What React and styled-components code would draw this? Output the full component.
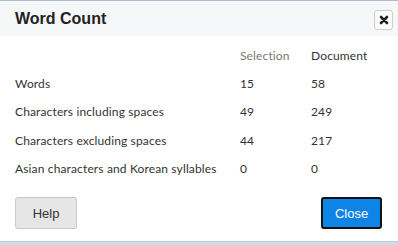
import React from "react";
import styled, { createGlobalStyle } from "styled-components";

const Global = createGlobalStyle`
  html, body { margin: 0; padding: 0; background: #c9dff0; }
  body { width: 398px; height: 245px; overflow: hidden; }
`;

const Dialog = styled.div`
  width: 398px;
  height: 242px;
  box-sizing: border-box;
  background: #fff;
  border-top: 1px solid #aebccc;
  border-bottom: 1px solid #c4c4c4;
  display: flex;
  flex-direction: column;
`;

const Header = styled.div`
  height: 35px;
  background: #f6f7f9;
  display: flex;
  align-items: center;
  justify-content: space-between;
  padding: 0 5px 0 15px;
`;

const Title = styled.h1`
  margin: 0;
  font: bold 16px "Liberation Sans", Arial, sans-serif;
  color: #222;
`;

const XButton = styled.button`
  width: 19px;
  height: 20px;
  padding: 0;
  border: 1px solid #cfcfcf;
  border-radius: 3px;
  background: #fafafa;
  display: flex;
  align-items: center;
  justify-content: center;
  margin-top: 2px;
`;

const Body = styled.div`
  flex: 1;
  padding: 5px 15px 0 15px;
`;

const Table = styled.div`
  display: grid;
  grid-template-columns: 225px 71px 1fr;
  grid-template-rows: 28px 28px 29px 28px 28px;
  font: 12px Lato, "Open Sans", sans-serif;
  letter-spacing: 0.14px;
  color: #333;
`;

const Cell = styled.div`
  display: flex;
  align-items: center;
  color: ${(p) => (p.$muted ? "#777" : "#333")};
`;

const Footer = styled.div`
  display: flex;
  justify-content: space-between;
  padding: 0 15px 12px 15px;
`;

const Button = styled.button`
  height: 32px;
  box-sizing: border-box;
  border-radius: 3px;
  font: 13px "Liberation Sans", Arial, sans-serif;
  padding: 0;
  width: ${(p) => (p.$primary ? "61px" : "62px")};
  background: ${(p) => (p.$primary ? "#0e84e6" : "#e6e6e6")};
  color: ${(p) => (p.$primary ? "#fff" : "#333")};
  border: ${(p) => (p.$primary ? "2px solid #111" : "1px solid #c8c8c8")};
  margin-right: ${(p) => (p.$primary ? "1px" : "0")};
`;

const rows = [
  ["Words", "15", "58"],
  ["Characters including spaces", "49", "249"],
  ["Characters excluding spaces", "44", "217"],
  ["Asian characters and Korean syllables", "0", "0"],
];

export default function App() {
  return (
    <>
      <Global />
      <Dialog>
        <Header>
          <Title>Word Count</Title>
          <XButton aria-label="Close">
            <svg width="10" height="10" viewBox="0 0 10 10">
              <path d="M2 2 L8 8 M8 2 L2 8" stroke="#222" strokeWidth="2.6" strokeLinecap="round" />
            </svg>
          </XButton>
        </Header>
        <Body>
          <Table>
            <Cell />
            <Cell $muted>Selection</Cell>
            <Cell>Document</Cell>
            {rows.map((r) => (
              <React.Fragment key={r[0]}>
                <Cell>{r[0]}</Cell>
                <Cell>{r[1]}</Cell>
                <Cell>{r[2]}</Cell>
              </React.Fragment>
            ))}
          </Table>
        </Body>
        <Footer>
          <Button>Help</Button>
          <Button $primary>Close</Button>
        </Footer>
      </Dialog>
    </>
  );
}
